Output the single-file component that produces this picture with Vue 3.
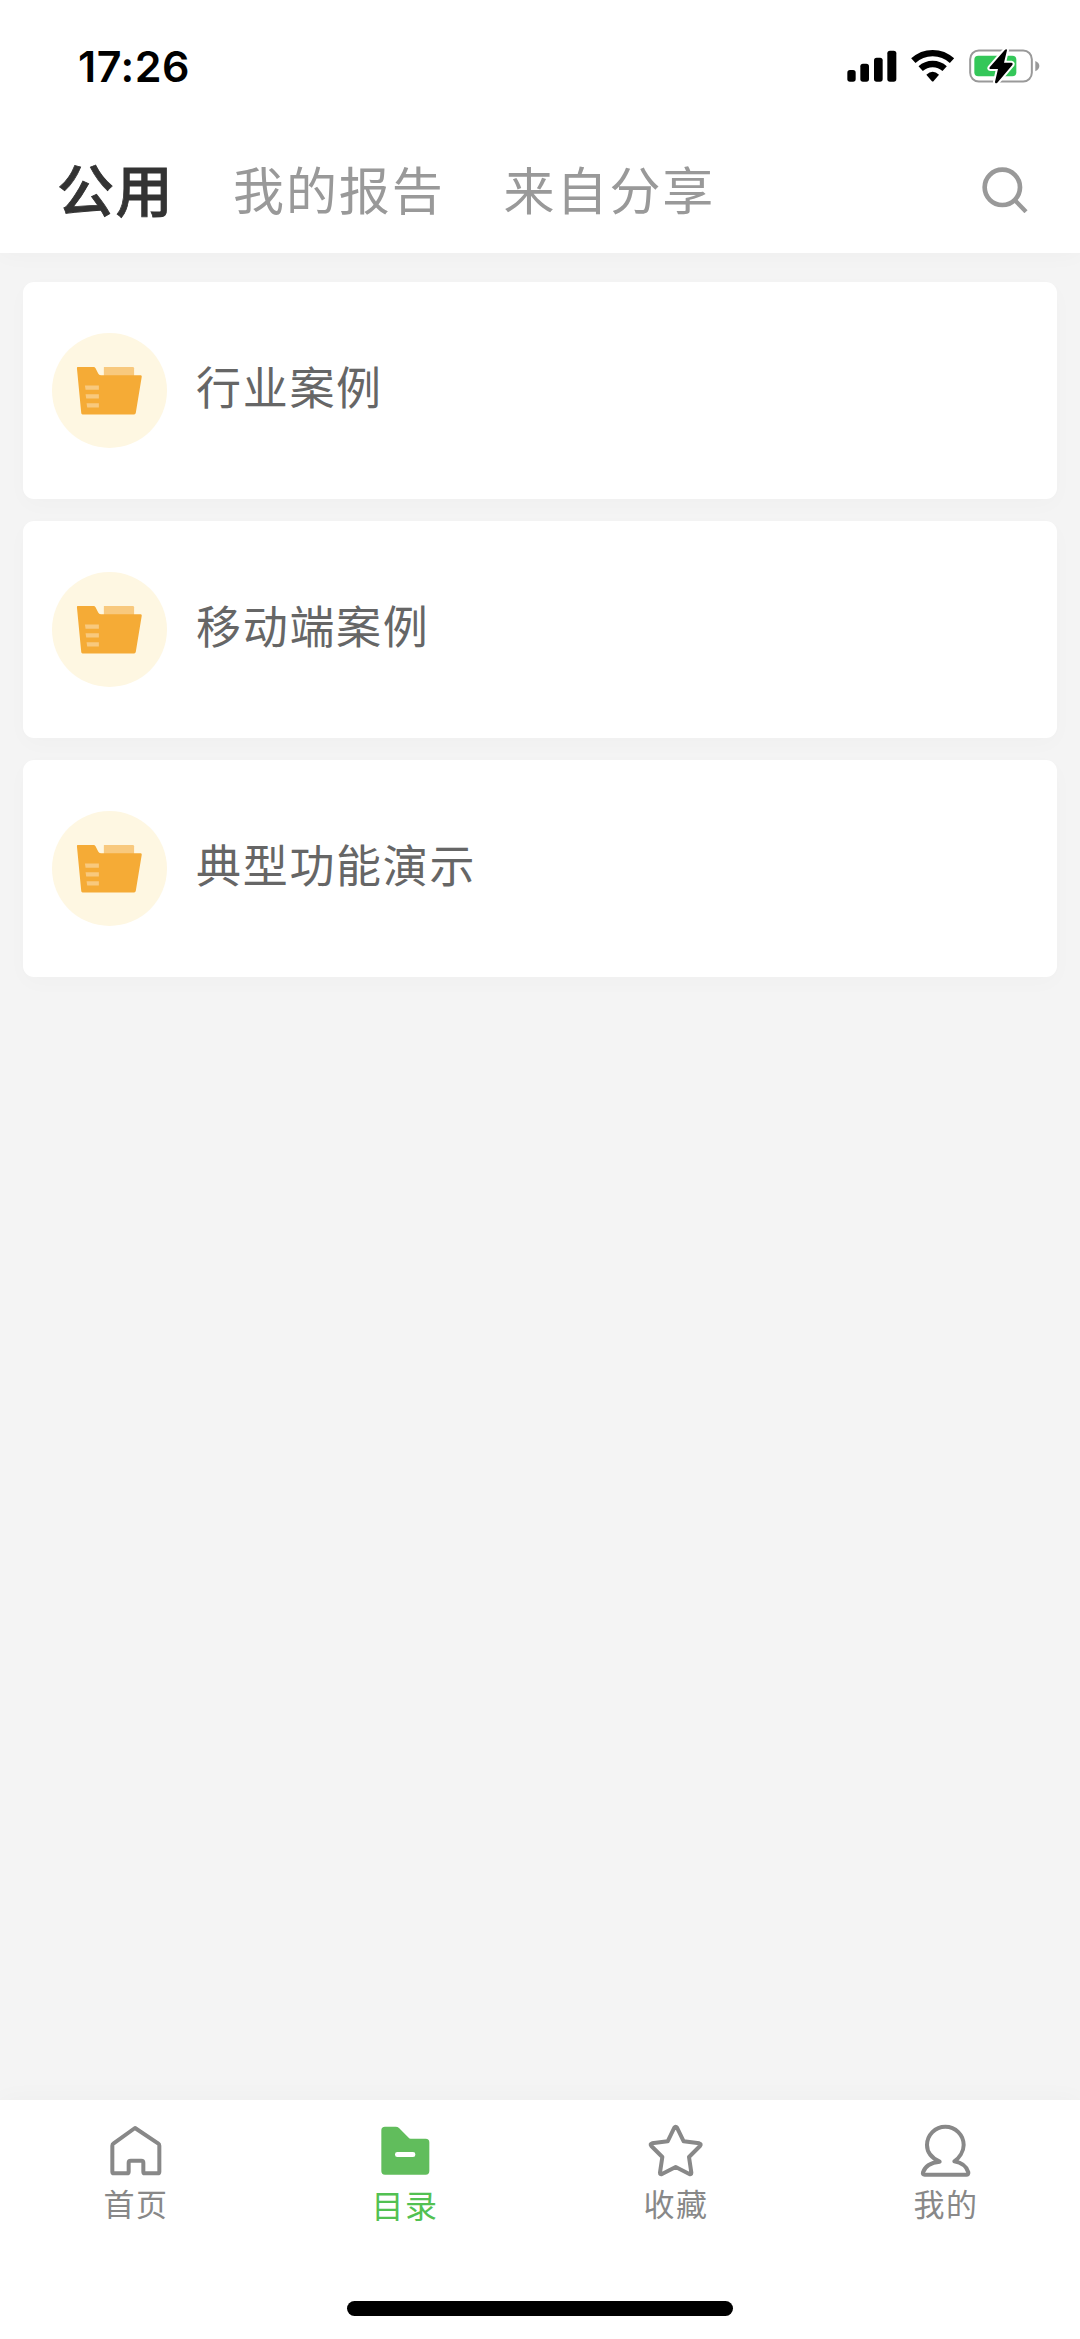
<script setup>
const tabs = ['公用', '我的报告', '来自分享']
const folders = ['行业案例', '移动端案例', '典型功能演示']
</script>

<template>
  <div class="screen">
    <header class="header">
      <div class="status">
        <span class="time">17:26</span>
        <svg class="signals" viewBox="0 0 588 114" width="196" height="38">
          <g>
            <rect x="1" y="69" width="25" height="35" rx="8" />
            <rect x="40" y="50" width="26" height="54" rx="8" />
            <rect x="81" y="32" width="26" height="72" rx="8" />
            <rect x="121" y="11" width="27" height="93" rx="8" />
          </g>
          <g fill="none" stroke="#000" stroke-width="19">
            <path d="M199 41A85 85 0 0 1 315 41" />
            <path d="M221 65A53 53 0 0 1 293 65" />
          </g>
          <path d="M238 83Q257 66 276 83L260 102Q257 105 254 102Z" />
          <rect x="369.500" y="10.500" width="185" height="93" rx="26" fill="none" stroke="#999" stroke-width="6" />
          <rect x="382" y="26" width="126" height="62" rx="12" fill="#34c759" />
          <path d="M565 42Q577 47 577 57Q577 67 565 73Z" fill="#999" />
          <path d="M474 8L428 61Q425 66 430 66H453L444 104Q444 112 451 107L496 54Q499 48 493 47H471L480 10Q480 4 474 8Z" stroke="#fff" stroke-width="12" paint-order="stroke" stroke-linejoin="round" />
        </svg>
      </div>
      <nav class="tabs">
        <span v-for="(tab, i) in tabs" :key="tab" class="tab" :class="{ current: i === 0 }">{{ tab }}</span>
        <svg class="search" viewBox="0 0 138 140" width="46" height="46.700" fill="none" stroke="#999">
          <circle cx="61" cy="61" r="53" stroke-width="14" />
          <path d="M98 99L132 134" stroke-width="13" />
        </svg>
      </nav>
    </header>

    <main class="list">
      <article v-for="name in folders" :key="name" class="card">
        <svg class="folder" viewBox="0 0 346 346" width="115" height="115">
          <circle cx="173" cy="173" r="173" fill="#fef7e2" />
          <path d="M156 102H243Q247 102 247 106V132H156Z" fill="#f8c97e" />
          <path d="M78 102H125Q129 102 131 106L139 122Q141 127 147 127H267Q271 127 270 132L252 241Q251 245 247 245H92Q88 245 88 241L75 106Q74 102 78 102Z" fill="#f5ab36" />
          <path d="M99 158H141V171H101ZM101 184H141V197H103ZM104 211H141V224H106Z" fill="#f8c97e" />
        </svg>
        <span class="name">{{ name }}</span>
      </article>
    </main>

    <footer class="footer">
      <nav class="nav">
        <div class="item">
          <svg viewBox="0 0 180 180" width="60" height="60" fill="none" stroke="#888" stroke-width="12" stroke-linejoin="round">
            <path d="M90 24L159 70Q163 72 163 77V155Q163 160 158 160H119Q115 160 115 155V128Q115 122 109 122H77Q71 122 71 128V155Q71 160 66 160H27Q22 160 22 155V77Q22 72 26 70Z" />
          </svg>
          <span>首页</span>
        </div>
        <div class="item active">
          <svg viewBox="0 0 180 180" width="60" height="60">
            <path d="M30 20H62Q68 20 72 24L101 53Q103 56 107 56H152Q163 56 163 67V153Q163 164 152 164H30Q19 164 19 153V31Q19 20 30 20Z" fill="#61bd5c" />
            <rect x="60" y="96" width="61" height="15" rx="7" fill="#fff" />
          </svg>
          <span>目录</span>
        </div>
        <div class="item">
          <svg viewBox="0 0 180 180" width="60" height="60" fill="none" stroke="#888" stroke-width="12" stroke-linejoin="round">
            <path d="M88 23Q92 17 96 23L116 64L163 70Q170 72 165 78L132 111L139 158Q139 165 133 162L92 141L51 162Q45 165 45 158L52 111L19 78Q14 72 21 70L68 64Z" />
          </svg>
          <span>收藏</span>
        </div>
        <div class="item">
          <svg viewBox="0 0 180 180" width="60" height="60" fill="none" stroke="#888" stroke-width="12" stroke-linejoin="round">
            <path d="M74 125C50 114 36 95 36 75A55 55 0 0 1 146 75C146 95 132 114 118 124C140 128 155 140 160 157Q161 164 154 164H29Q22 164 24 157C29 140 46 128 74 125Z" />
          </svg>
          <span>我的</span>
        </div>
      </nav>
      <div class="home-bar"></div>
    </footer>
  </div>
</template>

<style>
body {
  margin: 0;
}
</style>

<style scoped>
.screen {
  display: flex;
  flex-direction: column;
  width: 1080px;
  height: 2339px;
  overflow: hidden;
  background: #f4f4f4;
  font-family: "Noto Sans CJK SC", sans-serif;
}
.header {
  box-sizing: border-box;
  height: 253.4px;
  background: #fff;
  box-shadow: 0 0 24px rgba(0, 0, 0, 0.03);
}
.status {
  display: flex;
  justify-content: space-between;
  align-items: center;
  height: 132px;
  padding: 0 37px 0 78px;
}
.time {
  font: 600 43px/50px Inter, sans-serif;
  letter-spacing: 0.5px;
}
.tabs {
  display: flex;
  align-items: center;
  height: 116px;
  padding: 0 52px 0 57px;
}
.tab {
  margin: 0 59px 5px 0;
  color: #999;
  font-size: 51px;
  line-height: 70px;
  letter-spacing: 1.9px;
  white-space: nowrap;
}
.tab.current {
  margin-bottom: 6px;
  color: #333;
  font-size: 57px;
  font-weight: 500;
  letter-spacing: 1.5px;
  -webkit-text-stroke: 0.8px #333;
}
.search {
  margin-left: auto;
}
.list {
  display: flex;
  flex: 1;
  flex-direction: column;
  gap: 22.6px;
  padding: 28.8px 23px 0;
}
.card {
  display: flex;
  align-items: center;
  box-sizing: border-box;
  height: 216.4px;
  padding-left: 29px;
  border-radius: 11px;
  background: #fff;
  box-shadow: 0 6px 22px rgba(0, 0, 0, 0.018);
}
.name {
  margin: 0 0 9px 29px;
  color: #666;
  font-size: 45px;
  line-height: 64px;
  letter-spacing: 1.7px;
}
.footer {
  display: flex;
  flex-direction: column;
  align-items: center;
  height: 239px;
  background: #fff;
  box-shadow: 0 0 24px rgba(0, 0, 0, 0.03);
}
.nav {
  display: flex;
  width: 100%;
  height: 201px;
}
.item {
  display: flex;
  flex: 1;
  flex-direction: column;
  align-items: center;
  padding-top: 20px;
  color: #888;
  font-size: 31px;
  line-height: 46px;
}
.item span {
  padding-left: 2px;
  letter-spacing: 1.5px;
}
.item.active {
  color: #52c152;
  font-size: 32px;
  line-height: 49px;
}
.item.active span {
  padding-left: 0;
}
.home-bar {
  width: 386px;
  height: 15px;
  border-radius: 8px;
  background: #000;
}
</style>
